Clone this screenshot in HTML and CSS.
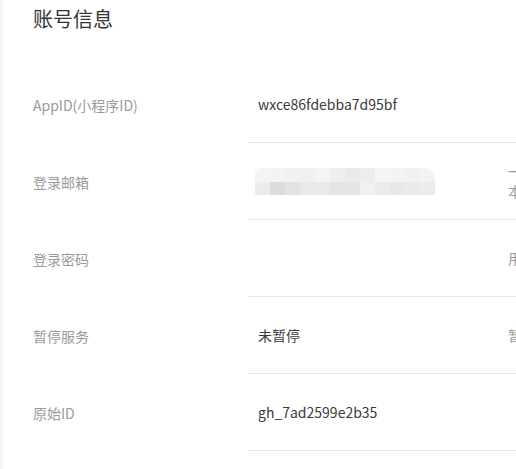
FILE: index.html
```html
<!DOCTYPE html>
<html lang="zh-CN">
<head>
<meta charset="utf-8">
<link rel="stylesheet" href="styles.css">
</head>
<body>
<div class="page">
  <div class="side"></div>
  <div class="main">
    <h2 class="title">账号信息</h2>
    <div class="table">
      <div class="row">
        <div class="label">AppID(小程序ID)</div>
        <div class="cells">
          <div class="value">wxce86fdebba7d95bf</div>
          <div class="extra"></div>
        </div>
      </div>
      <div class="row">
        <div class="label">登录邮箱</div>
        <div class="cells">
          <div class="value">
            <div class="blur">
              <div class="blur-row top">
                <span style="background:#f4f4f4"></span><span style="background:#f3f3f3"></span><span style="background:#f1f1f1"></span><span style="background:#f1f1f1"></span><span style="background:#f4f4f4"></span><span style="background:#efefef"></span><span style="background:#eaeaea"></span><span style="background:#ededed"></span><span style="background:#f5f5f5"></span><span style="background:#f3f3f3"></span><span style="background:#f1f1f1"></span><span style="background:#f3f3f3"></span>
              </div>
              <div class="blur-row">
                <span style="background:#ececec"></span><span style="background:#dcdcdc"></span><span style="background:#e3e3e3"></span><span style="background:#e9e9e9"></span><span style="background:#e9e9e9"></span><span style="background:#e5e5e5"></span><span style="background:#e5e5e5"></span><span style="background:#f0f0f0"></span><span style="background:#ebebeb"></span><span style="background:#e8e8e8"></span><span style="background:#eaeaea"></span><span style="background:#ececec"></span>
              </div>
            </div>
          </div>
          <div class="extra">一个邮箱只能申请一个小程序<br>本邮箱用于登录小程序后台</div>
        </div>
      </div>
      <div class="row">
        <div class="label">登录密码</div>
        <div class="cells">
          <div class="value"></div>
          <div class="extra">用于登录小程序后台</div>
        </div>
      </div>
      <div class="row">
        <div class="label">暂停服务</div>
        <div class="cells">
          <div class="value">未暂停</div>
          <div class="extra">暂停服务后小程序将无法访问</div>
        </div>
      </div>
      <div class="row">
        <div class="label">原始ID</div>
        <div class="cells">
          <div class="value">gh_7ad2599e2b35</div>
          <div class="extra"></div>
        </div>
      </div>
    </div>
  </div>
</div>
</body>
</html>
```

FILE: styles.css
```css
html, body {
  margin: 0;
  padding: 0;
  background: #ffffff;
  overflow: hidden;
  height: 469px;
}
body {
  font-family: "Noto Sans CJK SC", "Noto Sans", sans-serif;
  color: #353535;
}
.page {
  display: flex;
  width: 900px;
  height: 469px;
}
.side {
  width: 3px;
  flex: none;
  background: #f4f5f8;
}
.main {
  flex: none;
  padding-left: 30px;
}
.title {
  margin: 0;
  padding-top: 6px;
  height: 60px;
  font-size: 20px;
  font-weight: normal;
  line-height: 26px;
  color: #353535;
}
.row {
  display: flex;
}
.label {
  width: 215px;
  flex: none;
  height: 77px;
  display: flex;
  align-items: center;
  font-size: 14px;
  color: #9a9a9a;
}
.cells {
  display: flex;
  height: 76px;
  border-bottom: 1px solid #e7e7e7;
  width: 500px;
}
.value {
  width: 250px;
  flex: none;
  padding-left: 10px;
  box-sizing: border-box;
  display: flex;
  align-items: center;
  font-size: 14px;
  color: #3a3a3a;
}
.extra {
  padding-left: 10px;
  display: flex;
  align-items: center;
  font-size: 14px;
  line-height: 20px;
  color: #9a9a9a;
  white-space: nowrap;
}
.blur {
  margin-left: -3px;
  margin-top: 1px;
  display: flex;
  flex-direction: column;
}
.blur-row {
  display: flex;
  height: 13px;
}
.blur-row.top {
  height: 14px;
  border-radius: 6px 12px 0 0;
  overflow: hidden;
}
.blur-row span {
  width: 15px;
  height: 100%;
}
```
